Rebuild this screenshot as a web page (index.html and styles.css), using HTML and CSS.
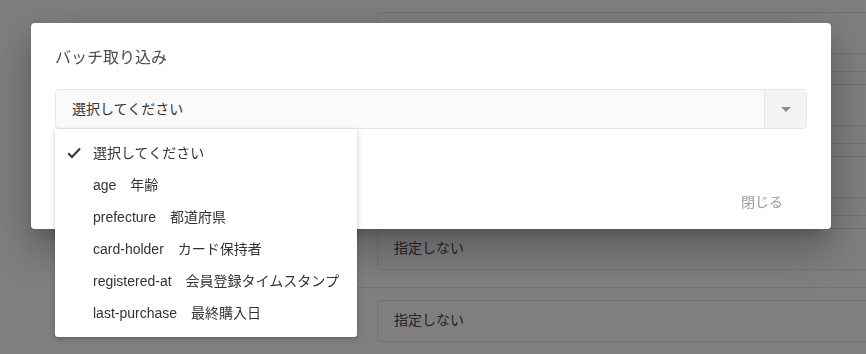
FILE: index.html
```html
<!DOCTYPE html>
<html lang="ja">
<head>
<meta charset="utf-8">
<title>バッチ取り込み</title>
<link rel="stylesheet" href="styles.css">
</head>
<body>
<div class="page">
  <div class="row"><div class="field">指定しない</div></div>
  <div class="row"><div class="field">指定しない</div></div>
  <div class="row"><div class="field">指定しない</div></div>
  <div class="row"><div class="field">指定しない</div></div>
  <div class="row"><div class="field">指定しない</div></div>
</div>
<div class="overlay"></div>
<div class="dialog">
  <h2 class="dialog-title">バッチ取り込み</h2>
  <div class="select">
    <div class="select-box">
      <span class="select-value">選択してください</span>
      <span class="select-arrow"><span class="triangle"></span></span>
    </div>
    <ul class="menu">
      <li class="menu-item selected">
        <svg class="check" width="14" height="12" viewBox="0 0 14 12"><path d="M1.2 6.2 L5 10 L13 1.5" fill="none" stroke="#333" stroke-width="2"/></svg>
        選択してください
      </li>
      <li class="menu-item">age　年齢</li>
      <li class="menu-item">prefecture　都道府県</li>
      <li class="menu-item">card-holder　カード保持者</li>
      <li class="menu-item">registered-at　会員登録タイムスタンプ</li>
      <li class="menu-item">last-purchase　最終購入日</li>
    </ul>
  </div>
  <div class="actions">
    <button class="btn-close">閉じる</button>
  </div>
</div>
</body>
</html>
```

FILE: styles.css
```css
html, body {
  margin: 0;
  padding: 0;
  background: #fff;
  font-family: "Liberation Sans", "Noto Sans CJK JP", sans-serif;
  color: #333;
  overflow: hidden;
}

.page {
  padding-left: 200px;
  overflow: hidden;
}

.row {
  padding: 12px 0 17px 177px;
  border-bottom: 1px solid #e8e8e8;
}

.field {
  height: 40px;
  margin-right: -8px;
  border: 1px solid #e4e4e4;
  border-radius: 4px;
  padding-left: 16px;
  font-size: 14px;
  line-height: 38px;
  color: #4a4a4a;
}

.overlay {
  position: fixed;
  inset: 0;
  background: rgba(0, 0, 0, 0.5);
}

.dialog {
  position: absolute;
  left: 31px;
  top: 23px;
  width: 800px;
  height: 206px;
  box-sizing: border-box;
  background: #fff;
  border-radius: 4px;
  padding: 24px 24px 0;
  box-shadow: 0 11px 15px -7px rgba(0,0,0,.2), 0 24px 38px 3px rgba(0,0,0,.14), 0 9px 46px 8px rgba(0,0,0,.12);
}

.dialog-title {
  margin: 0 0 20px;
  font-size: 16px;
  font-weight: normal;
  line-height: 22px;
  color: #4d4d4d;
}

.select {
  position: relative;
}

.select-box {
  display: flex;
  height: 40px;
  box-sizing: border-box;
  border: 1px solid #e6e6e6;
  border-radius: 4px;
  background: #fafafa;
}

.select-value {
  flex: 1;
  padding-left: 16px;
  font-size: 14px;
  line-height: 38px;
  color: #333;
}

.select-arrow {
  width: 41px;
  border-left: 1px solid #e6e6e6;
  background: #f4f4f4;
  border-radius: 0 4px 4px 0;
  display: flex;
  align-items: center;
  justify-content: center;
}

.triangle {
  width: 0;
  height: 0;
  border-left: 5px solid transparent;
  border-right: 5px solid transparent;
  border-top: 5px solid #8c8c8c;
}

.menu {
  position: absolute;
  left: 0;
  top: 40px;
  width: 302px;
  margin: 0;
  padding: 8px 0;
  list-style: none;
  background: #fff;
  border-radius: 0 0 3px 3px;
  box-shadow: 0 2px 6px rgba(0,0,0,.18), 0 1px 3px rgba(0,0,0,.1);
  z-index: 2;
}

.menu-item {
  position: relative;
  height: 32px;
  line-height: 32px;
  padding-left: 38px;
  font-size: 14px;
  color: #333;
  white-space: nowrap;
}

.check {
  position: absolute;
  left: 12px;
  top: 10px;
}

.actions {
  display: flex;
  justify-content: flex-end;
  margin-top: 54px;
  padding-right: 8px;
}

.btn-close {
  height: 36px;
  padding: 0 16px;
  border: 0;
  background: transparent;
  font-family: inherit;
  font-size: 14px;
  color: #9a9a9a;
}
```
